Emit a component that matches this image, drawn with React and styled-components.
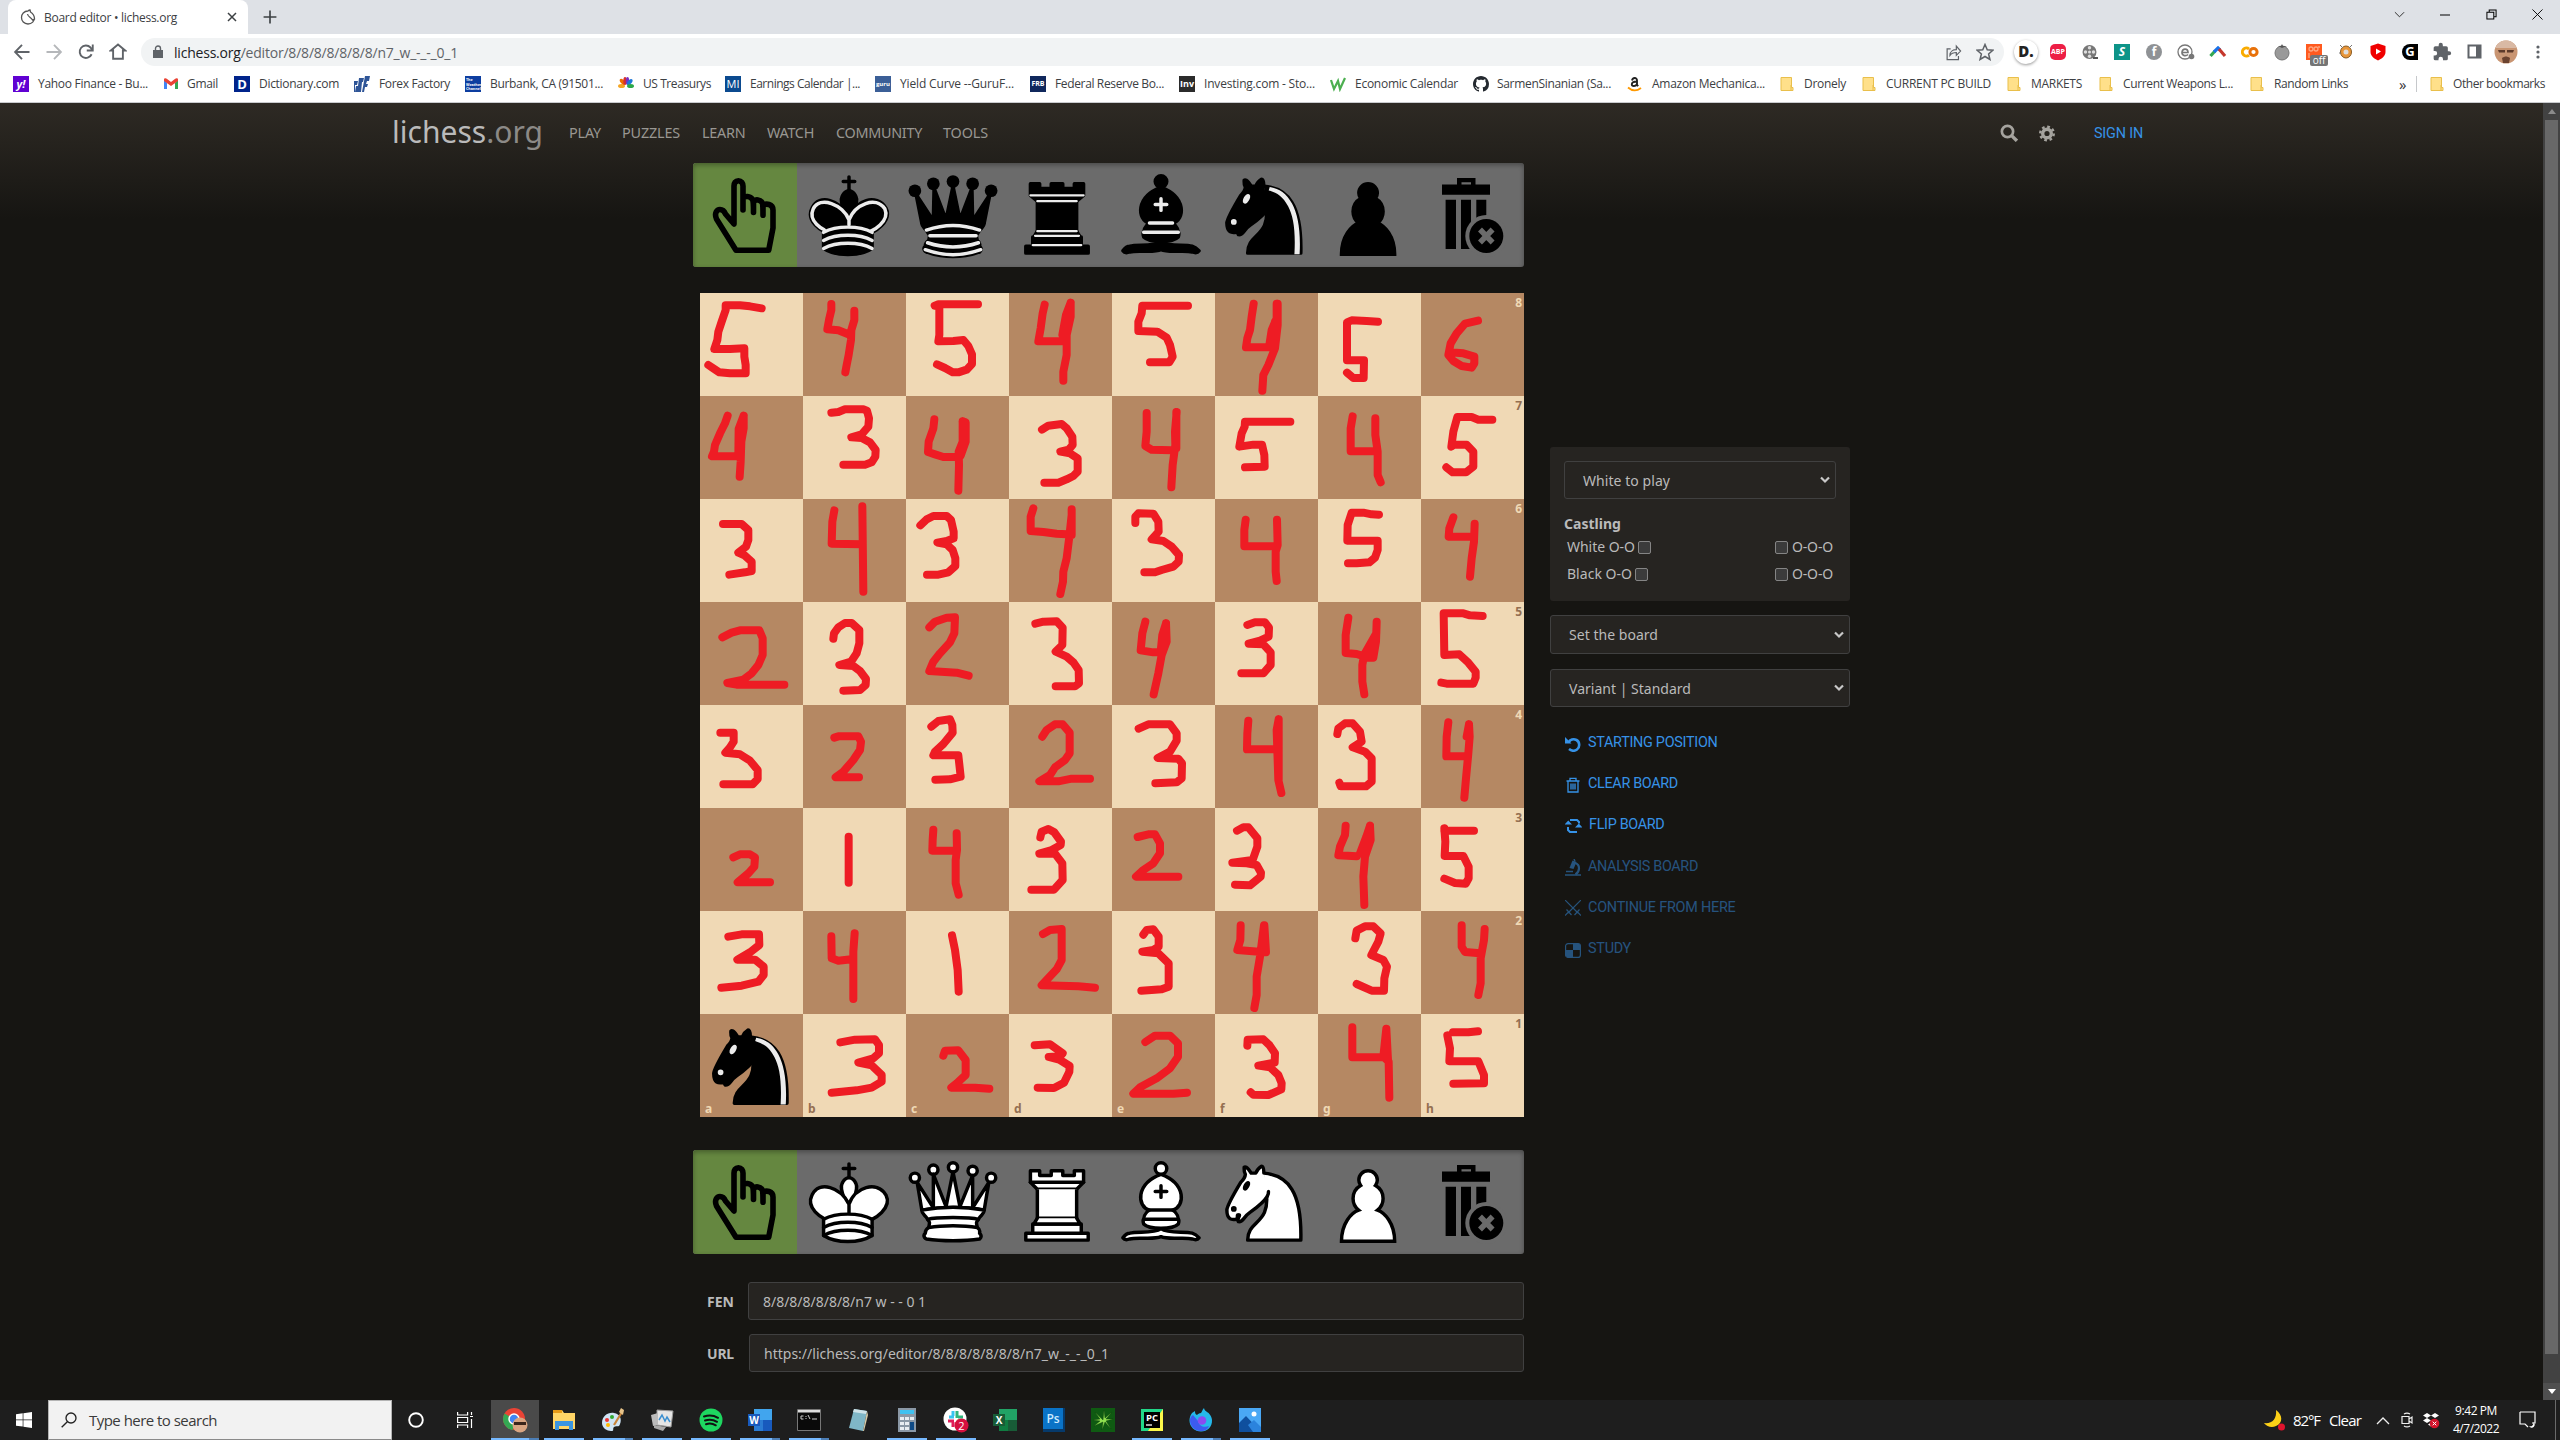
import React, { useLayoutEffect, useRef, useState } from "react";
import styled, { createGlobalStyle, css } from "styled-components";

const GlobalStyle = createGlobalStyle`
  * { box-sizing: border-box; }
  html, body { margin: 0; padding: 0; background: #161512; overflow: hidden; }
  body { font-family: "Noto Sans", "Open Sans", sans-serif; }
  svg { display: block; flex: none; }
`;

/* ---------- text that tracks to a given width ---------- */
const FitSpan = styled.span`
  display: block;
  flex: none;
  white-space: nowrap;
`;

function Fit({ w, children, className }) {
  const ref = useRef(null);
  const [ls, setLs] = useState(0);
  const length = React.Children.toArray(children)
    .map((c) => (typeof c === "string" ? c : c.props.children))
    .join("").length;
  useLayoutEffect(() => {
    const range = document.createRange();
    range.selectNodeContents(ref.current);
    const natural = range.getBoundingClientRect().width - ls * length;
    setLs((w - natural) / length);
  }, [w, length]);
  return (
    <FitSpan ref={ref} className={className} style={{ width: w, letterSpacing: ls }}>
      {children}
    </FitSpan>
  );
}

/* ---------- browser window ---------- */
const Desktop = styled.div`
  width: 2560px;
  height: 1440px;
  display: flex;
  flex-direction: column;
  overflow: hidden;
`;

const TitleBar = styled.div`
  height: 34px;
  flex: none;
  display: flex;
  background: #dee1e6;
  padding-left: 8px;
`;

const Tab = styled.div`
  width: 240px;
  height: 34px;
  display: flex;
  align-items: center;
  padding: 0 10px 0 12px;
  gap: 8px;
  background: #fff;
  border-radius: 8px 8px 0 0;
  font: 12px "Open Sans", sans-serif;
  color: #3c4043;
`;

const Push = styled.div`
  flex: 1;
`;

const NewTab = styled.div`
  width: 44px;
  height: 34px;
  display: grid;
  place-items: center;
`;

const WindowButtons = styled.div`
  display: flex;
  height: 29px;
  margin-right: 0;
`;

const WindowButton = styled.div`
  width: 46px;
  display: grid;
  place-items: center;
`;

const Toolbar = styled.div`
  height: 35px;
  flex: none;
  display: flex;
  align-items: center;
  background: #fff;
  padding-left: 6px;
`;

const ToolCell = styled.div`
  width: 32px;
  height: 32px;
  flex: none;
  display: grid;
  place-items: center;
`;

const Omnibox = styled.div`
  width: 1863px;
  height: 28px;
  margin: 1px 6px 0 7px;
  border-radius: 14px;
  background: #f1f3f4;
  display: flex;
  align-items: center;
  padding-left: 12px;
  gap: 11px;
  font: 14px "Open Sans", sans-serif;
  color: #5f6368;
  b {
    font-weight: 400;
    color: #202124;
  }
`;

const OmniActions = styled.div`
  display: flex;
  margin-left: auto;
  margin-right: 3px;
`;

const Bookmarks = styled.div`
  height: 34px;
  flex: none;
  display: flex;
  align-items: center;
  background: #fff;
  border-bottom: 1px solid #c9cbce;
  padding: 0 0 4px 13px;
  font: 12px "Open Sans", sans-serif;
  color: #3c4043;
`;

const Bookmark = styled.div`
  width: ${(p) => p.$w}px;
  flex: none;
  display: flex;
  align-items: center;
  gap: ${(p) => p.$gap || 9}px;
`;

const Favicon = styled.div`
  width: 16px;
  height: 16px;
  flex: none;
  background: ${(p) => p.$bg || "transparent"};
  color: ${(p) => p.$fg || "#fff"};
  font: ${(p) => p.$font || "700 9px 'Open Sans', sans-serif"};
  line-height: 16px;
  text-align: center;
  white-space: nowrap;
`;

const Divider = styled.div`
  width: 1px;
  height: 16px;
  background: #c6c8cb;
  margin-right: 12px;
`;

const More = styled.div`
  width: 17px;
  font-size: 15px;
  line-height: 14px;
  color: #333;
`;

/* ---------- page ---------- */
const Viewport = styled.div`
  height: 1297px;
  flex: none;
  display: flex;
`;

const Page = styled.div`
  width: 2543px;
  background: linear-gradient(to bottom, #2e2a24, #161512 116px) no-repeat #161512;
`;

const Scrollbar = styled.div`
  width: 17px;
  background: #424242;
  display: flex;
  flex-direction: column;
  align-items: center;
`;

const ScrollButton = styled.div`
  width: 17px;
  height: 17px;
  display: grid;
  place-items: center;
  background: ${(p) => (p.$lit ? "#4f4f4f" : "#424242")};
`;

const Thumb = styled.div`
  width: 13px;
  height: 1234px;
  background: #686868;
  margin-bottom: auto;
`;

const Header = styled.header`
  height: 60px;
  display: flex;
  align-items: center;
  padding-left: 392px;
`;

const SiteTitle = styled.div`
  font-size: 30px;
  line-height: 60px;
  color: #bababa;
  margin-right: 26px;
  padding-bottom: 3px;
  span span {
    color: #8c8a87;
  }
`;

const NavItem = styled.div`
  width: ${(p) => p.$w}px;
  padding-bottom: 1px;
  font-size: 14.4px;
  color: #999792;
`;

const HeaderTools = styled.div`
  display: flex;
  align-items: center;
  margin-left: auto;
  padding-right: 400px;
  font: 14.4px Roboto, sans-serif;
  color: #3692e7;
`;

const SearchSlot = styled.div`
  margin-right: 21px;
`;
const GearSlot = styled.div`
  margin-right: 39px;
`;

const Main = styled.main`
  display: flex;
  padding-left: 693px;
`;

const Editor = styled.div`
  width: 831px;
`;

const Palette = styled.div`
  height: 104px;
  display: grid;
  grid-template-columns: repeat(8, 1fr);
  background: #6b6b6b;
  border-radius: 3px;
  overflow: hidden;
  position: relative;
  &::after {
    content: "";
    position: absolute;
    inset: 0;
    border-radius: 3px;
    box-shadow: inset 0 2px 5px rgba(0, 0, 0, 0.32);
  }
`;

const PaletteCell = styled.div`
  display: grid;
  place-items: center;
  background: ${(p) => (p.$selected ? "#658740" : "transparent")};
`;

const BoardFrame = styled.div`
  width: 824px;
  height: 824px;
  margin: 26px 0 33px 7px;
  position: relative;
`;

const Board = styled.div`
  display: grid;
  grid-template-columns: repeat(8, 103px);
  grid-template-rows: repeat(8, 103px);
`;

const Square = styled.div`
  background: ${(p) => (p.$dark ? "#b58863" : "#f0d9b5")};
  color: ${(p) => (p.$dark ? "#f0d9b5" : "#946f51")};
  display: flex;
  flex-direction: column;
  justify-content: space-between;
  font-size: 12px;
  font-weight: 700;
  line-height: 16px;
`;

const Rank = styled.span`
  align-self: flex-end;
  padding: 2px 2px 0 0;
`;

const File = styled.span`
  padding-left: 5px;
  margin-top: auto;
`;

const BoardPiece = styled.div`
  position: absolute;
  left: 0;
  bottom: 0;
`;

const Ink = styled.svg`
  position: absolute;
  left: 0;
  top: 0;
`;

const Copyables = styled.div`
  display: flex;
  flex-direction: column;
  gap: 14px;
  margin-top: 28px;
`;

const CopyRow = styled.div`
  display: flex;
  align-items: center;
  padding-left: 14px;
  font-size: 14px;
  color: #bababa;
`;

const RowLabel = styled.div`
  width: ${(p) => p.$w}px;
  font-weight: 700;
`;

const TextField = styled.div`
  flex: 1;
  height: 38px;
  display: flex;
  align-items: center;
  padding-left: 14px;
  background: #262421;
  border: 1px solid #404040;
  border-radius: 3px;
`;

const Side = styled.aside`
  width: 300px;
  margin: 284px 0 0 26px;
  color: #bababa;
  font-size: 14px;
`;

const Meta = styled.div`
  height: 154px;
  padding: 14px 14px 0;
  background: #262421;
  border-radius: 3px;
  margin-bottom: 14px;
`;

const Select = styled.div`
  height: ${(p) => p.$h || 38}px;
  display: flex;
  align-items: center;
  justify-content: space-between;
  padding: 0 4px 0 18px;
  background: #262421;
  border: 1px solid #404040;
  border-radius: 3px;
  margin-bottom: 15px;
`;

const CastlingTitle = styled.div`
  font-weight: 700;
  line-height: 20px;
`;

const CastlingRow = styled.div`
  height: 27px;
  display: flex;
  align-items: center;
  padding: 0 3px;
  margin-top: ${(p) => (p.$first ? "-1px" : "0")};
`;

const Check = styled.div`
  width: 13px;
  height: 13px;
  margin: ${(p) => p.$m};
  background: #3b3b3b;
  border: 1px solid #858585;
  border-radius: 2px;
`;

const Action = styled.div`
  height: 41.2px;
  display: flex;
  align-items: center;
  gap: 7px;
  padding-left: 15px;
  font: 14.4px Roboto, sans-serif;
  color: #3692e7;
  opacity: ${(p) => (p.$off ? 0.5 : 1)};
  svg {
    margin-top: 2px;
  }
`;

/* ---------- taskbar ---------- */
const Taskbar = styled.div`
  height: 40px;
  flex: none;
  display: flex;
  background: #1e1e1e;
  color: #fff;
`;

const StartButton = styled.div`
  width: 48px;
  display: grid;
  place-items: center;
`;

const SearchBox = styled.div`
  width: 344px;
  display: flex;
  align-items: center;
  gap: 12px;
  padding-left: 12px;
  background: #f2f2f2;
  border: 1px solid #b4b4b4;
  border-bottom-color: #8a8a8a;
  color: #3a3a3a;
  font: 15px "Open Sans", sans-serif;
`;

const TaskGlyph = styled.div`
  width: ${(p) => p.$w}px;
  display: grid;
  place-items: center;
`;

const Task = styled.div`
  width: 48px;
  height: 40px;
  margin-right: 1px;
  display: grid;
  place-items: center;
  position: relative;
  ${(p) => p.$active && css`background: #4a4a4a;`}
  &::after {
    content: "";
    position: absolute;
    bottom: 0;
    left: ${(p) => (p.$active ? 0 : 4)}px;
    right: ${(p) => (p.$active ? 0 : 4)}px;
    height: 2px;
    background: ${(p) =>
      p.$run === 2 ? "linear-gradient(90deg, #76b9ff 80%, #4c7eb5 80%)" : p.$run ? "#76b9ff" : "transparent"};
  }
`;

const Tray = styled.div`
  display: flex;
  align-items: center;
  margin-left: auto;
  font: 15px "Open Sans", sans-serif;
`;

const TraySlot = styled.div`
  width: ${(p) => p.$w}px;
  flex: none;
`;

const Clock = styled.div`
  width: 66px;
  display: flex;
  flex-direction: column;
  align-items: flex-start;
  font-size: 12px;
  line-height: 18px;
  > :first-child {
    margin-left: 2px;
  }
`;

const PeekLine = styled.div`
  width: 5px;
  height: 40px;
  border-left: 1px solid #6a6a6a;
`;

/* ---------- chess pieces ---------- */
const Piece = ({ size = 104, children }) => (
  <svg
    width={size}
    height={size}
    viewBox="0 0 45 45"
    fill="none"
    fillRule="evenodd"
    stroke="#000"
    strokeWidth="1.5"
    strokeLinecap="round"
    strokeLinejoin="round"
  >
    {children}
  </svg>
);

const K_BODY = "M11.5 37c5.5 3.5 15.5 3.5 21 0v-7s9-4.5 6-10.5c-4-6.5-13.5-3.5-16 4V27v-3.5c-3.5-7.5-13-10.5-16-4-3 6 5 10 5 10z";
const K_HEAD = "M22.5 25s4.5-7.5 3-10.5c0 0-1-2.5-3-2.5s-3 2.5-3 2.5c-1.5 3 3 10.5 3 10.5";
const K_BANDS = "M11.5 30c5.5-3 15.5-3 21 0m-21 3.5c5.5-3 15.5-3 21 0m-21 3.5c5.5-3 15.5-3 21 0";
const Q_BASE =
  "M9 26c0 2 1.5 2 2.5 4 1 1.5 1 1 .5 3.5-1.5 1-1.5 2.5-1.5 2.5-1.5 1.5.5 2.5.5 2.5 6.5 1 16.5 1 23 0 0 0 1.5-1 0-2.5 0 0 .5-1.5-1-2.5-.5-2.5-.5-2 .5-3.5 1-2 2.5-2 2.5-4-8.5-1.5-18.5-1.5-27 0z";

const King = ({ white }) => (
  <Piece>
    <path strokeLinejoin="miter" d="M22.5 11.63V6M20 8h5" />
    <path fill={white ? "#fff" : "#000"} strokeLinecap="butt" strokeLinejoin="miter" d={K_HEAD} />
    <path fill={white ? "#fff" : "#000"} d={K_BODY} />
    {!white && (
      <path stroke="#ececec" d="M32 29.5s8.5-4 6-9.7C34.1 14 25 18 22.5 24.6v2.1-2.1C20 18 9.9 14 7 19.9c-2.5 5.6 4.8 9 4.8 9" />
    )}
    <path stroke={white ? "#000" : "#ececec"} d={K_BANDS} />
  </Piece>
);

const Queen = ({ white }) =>
  white ? (
    <Piece>
      <g fill="#fff">
        <path d="M8 12a2 2 0 1 1-4 0 2 2 0 1 1 4 0zm16.5-4.5a2 2 0 1 1-4 0 2 2 0 1 1 4 0zM41 12a2 2 0 1 1-4 0 2 2 0 1 1 4 0zM16 8.5a2 2 0 1 1-4 0 2 2 0 1 1 4 0zM33 9a2 2 0 1 1-4 0 2 2 0 1 1 4 0z" />
        <path strokeLinecap="butt" d="M9 26c8.5-1.5 21-1.5 27 0l2-12-7 11V11l-5.5 13.5-3-15-3 15-5.5-14V25L7 14z" />
        <path strokeLinecap="butt" d={Q_BASE} />
      </g>
      <path d="M11.5 30c3.5-1 18.5-1 22 0M12 33.5c6-1 15-1 21 0" />
    </Piece>
  ) : (
    <Piece>
      <g fill="#000" stroke="none">
        <circle cx="6" cy="12" r="2.75" />
        <circle cx="14" cy="9" r="2.75" />
        <circle cx="22.5" cy="8" r="2.75" />
        <circle cx="31" cy="9" r="2.75" />
        <circle cx="39" cy="12" r="2.75" />
      </g>
      <g fill="#000" strokeLinecap="butt">
        <path d="M9 26c8.5-1.5 21-1.5 27 0l2.5-12.5L31 25l-.3-14.1-5.2 13.6-3-14.5-3 14.5-5.2-13.6L14 25 6.5 13.5z" />
        <path d={Q_BASE} />
      </g>
      <path strokeLinecap="butt" d="M11 38.5a35 35 1 0 0 23 0" />
      <path stroke="#ececec" d="M11 29a35 35 1 0 1 23 0M12.5 31.5h20M11.5 34.5a35 35 1 0 0 22 0M10.5 37.5a35 35 1 0 0 24 0" />
    </Piece>
  );

const Rook = ({ white }) =>
  white ? (
    <Piece>
      <g fill="#fff">
        <path strokeLinecap="butt" d="M9 39h27v-3H9v3zm3-3v-4h21v4H12zm-1-22V9h4v2h5V9h5v2h5V9h4v5" />
        <path d="M34 14l-3 3H14l-3-3" />
        <path strokeLinecap="butt" strokeLinejoin="miter" d="M31 17v12.5H14V17" />
        <path d="M31 29.5l1.5 2.5h-20l1.5-2.5" />
        <path fill="none" strokeLinejoin="miter" d="M11 14h23" />
      </g>
    </Piece>
  ) : (
    <Piece>
      <g fill="#000" strokeLinecap="butt">
        <path d="M9 39h27v-3H9v3zm3.5-7l1.5-2.5h17l1.5 2.5h-20zm-.5 4v-4h21v4H12z" />
        <path strokeLinejoin="miter" d="M14 29.5v-13h17v13H14z" />
        <path d="M14 16.5L11 14h23l-3 2.5H14zM11 14V9h4v2h5V9h5v2h5V9h4v5H11z" />
      </g>
      <path stroke="#ececec" strokeWidth="1" strokeLinejoin="miter" d="M12 35.5h21m-20-4h19m-18-2h17m-17-13h17M11 14h23" />
    </Piece>
  );

const Bishop = ({ white }) => (
  <Piece>
    <g fill={white ? "#fff" : "#000"} strokeLinecap="butt">
      <path d="M9 36c3.4-1 10.1.4 13.5-2 3.4 2.4 10.1 1 13.5 2 0 0 1.6.5 3 2-.7 1-1.6 1-3 .5-3.4-1-10.1.5-13.5-1-3.4 1.5-10.1 0-13.5 1-1.4.5-2.3.5-3-.5 1.4-2 3-2 3-2z" />
      <path d="M15 32c2.5 2.5 12.5 2.5 15 0 .5-1.5 0-2 0-2 0-2.5-2.5-4-2.5-4 5.5-1.5 6-11.5-5-15.5-11 4-10.5 14-5 15.5 0 0-2.5 1.5-2.5 4 0 0-.5.5 0 2z" />
      <path d="M25 8a2.5 2.5 0 1 1-5 0 2.5 2.5 0 1 1 5 0z" />
    </g>
    <path stroke={white ? "#000" : "#ececec"} strokeLinejoin="miter" d="M17.5 26h10M15 30h15m-7.5-14.5v5M20 18h5" />
  </Piece>
);

const Knight = ({ white, size }) => (
  <Piece size={size}>
    <g fill={white ? "#fff" : "#000"}>
      <path d="M22 10c10.5 1 16.5 8 16 29H15c0-9 10-6.5 8-21" />
      <path d="M24 18c.38 2.91-5.55 7.37-8 9-3 2-2.82 4.34-5 4-1.042-.94 1.41-3.04 0-3-1 0 .19 1.23-1 2-1 0-4.003 1-4-4 0-2 6-12 6-12s1.89-1.9 2-3.5c-.73-.994-.5-2-.5-3 1-1 3 2.5 3 2.5h2s.78-1.992 2.5-3c1 0 1 3 1 3" />
    </g>
    <path
      fill={white ? "#000" : "#ececec"}
      stroke={white ? "#000" : "#ececec"}
      d="M9.5 25.5a.5.5 0 1 1-1 0 .5.5 0 1 1 1 0zm5.433-9.75a.5 1.5 30 1 1-.866-.5.5 1.5 30 1 1 .866.5z"
    />
    {!white && (
      <path
        fill="#ececec"
        stroke="none"
        d="M24.55 10.4l-.45 1.45.5.15c3.15 1 5.65 2.49 7.9 6.75S35.75 29.06 35.25 39l-.05.5h2.25l.05-.5c.5-10.06-.88-16.85-3.25-21.34-2.37-4.49-5.79-6.64-9.19-7.16z"
      />
    )}
  </Piece>
);

const Pawn = ({ white }) => (
  <Piece>
    <path
      fill={white ? "#fff" : "#000"}
      strokeLinejoin="miter"
      d="M22.1 9c-2.21 0-4 1.79-4 4 0 .89.29 1.71.78 2.38C16.93 16.5 15.6 18.59 15.6 21c0 2.03.94 3.84 2.41 5.03-3 1.06-7.41 5.55-7.41 13.47h23c0-7.92-4.41-12.41-7.41-13.47 1.47-1.19 2.41-3 2.41-5.03 0-2.41-1.33-4.5-3.28-5.62.49-.67.78-1.49.78-2.38 0-2.21-1.79-4-4-4z"
    />
  </Piece>
);

const Hand = () => (
  <svg width="104" height="104" viewBox="0 0 104 104" fill="none" stroke="#000" strokeWidth="5.6" strokeLinejoin="round" strokeLinecap="round">
    <path d="M43 87.3 23.5 56C21 50 24 46.5 27 46.5c3 0 4.500 2 5.500 4.500L41 61V23c0-3 1.500-5.300 4.400-5.300s4.600 2.300 4.600 5.300v24V35c2-2 7-2.500 9.500 1.500.8 1.500 1 3 1 13V38c2.500-1.800 6.500-1.500 8.500 1.300.9 1.300 1 3 1 13V42c3-1.500 10-1.500 10 5v18l-4.300 22.300z" />
  </svg>
);

const Trash = () => (
  <svg width="104" height="104" viewBox="1 0 104 104" fill="#000">
    <path fillRule="evenodd" d="M37 15h18.500v6.500H70v10.300H22V21.500h15zM41.500 19.300v2.200h9.500v-2.200z" />
    <path d="M25.600 36.700H36V86H25.600zM41 36.700h10V86H41zM56.300 36.700h10V60h-10z" />
    <circle cx="66.300" cy="73" r="21" fill="#6b6b6b" />
    <circle cx="66.300" cy="73" r="17" />
    <path d="m60 66.500 12.600 13M72.600 66.500 60 79.500" stroke="#6b6b6b" strokeWidth="5.500" />
  </svg>
);

const PaletteRow = ({ white }) => (
  <Palette>
    <PaletteCell $selected><Hand /></PaletteCell>
    <PaletteCell><King white={white} /></PaletteCell>
    <PaletteCell><Queen white={white} /></PaletteCell>
    <PaletteCell><Rook white={white} /></PaletteCell>
    <PaletteCell><Bishop white={white} /></PaletteCell>
    <PaletteCell><Knight white={white} size={104} /></PaletteCell>
    <PaletteCell><Pawn white={white} /></PaletteCell>
    <PaletteCell><Trash /></PaletteCell>
  </Palette>
);

/* ---------- pen strokes drawn over the board, in thirds of a pixel, one list per quarter ---------- */
const STROKES = [
  { x: -10, y: -8, paths: [
    "M215 70 180 64 150 61H107V75L95 110 85 140 82 165 73 192H120L163 190V215L167 240V265H120L88 262 70 250 55 240",
    "M424 57V75L418 100 412 133 445 136 475 148M493 77V105L484 135 483 165 476 210 470 240 466 262",
    "M734 62 745 58H864M748 62V150L745 169 790 168 820 165 835 183 846 208V237L830 254 805 262H788L765 249 741 238",
    "M1064 59 1058 85 1052 130 1045 169H1120M1142 53V95L1130 150V210L1120 260V287M1142 53 1128 90 1117 150 1128 169",
    "M113 392 105 415 90 445 75 480 72 500 66 514H150M161 392 146 432 145 514M161 392V430L154 470 152 530 149 575",
    "M424 383 445 381 465 373H520L531 377 537 400 535 425 515 448 484 457 515 459 540 472 557 495 556 515 545 532 525 539H460",
    "M733 403 730 430 716 470 714 501 735 508 760 516H800M818 409V470L806 500 807 540 805 617M818 409 827 412V470L812 512",
    "M1056 434 1075 422 1115 417 1130 430 1147 455 1148 480 1136 494 1111 500 1140 505 1163 520V560L1150 573 1130 583 1105 593H1063",
    "M99 717H155L175 735V765L168 785 145 803 165 812 185 830V858L165 862 118 869",
    "M433 676 427 710 425 776 515 778M517 664 520 920",
    "M691 721 710 703 730 693H770L783 705 791 740V760L770 768 742 773 770 778 788 795 796 820V843L775 862 745 869H711",
    "M1030 670 1022 695V738L1060 741 1100 746 1130 748M1145 673V690L1138 755 1130 820 1120 860 1119 890 1111 927M1145 673V750",
    "M97 1057 125 1043 150 1036H208L218 1060V1110L205 1140 185 1165 160 1184 112 1194 140 1199H283",
    "M430 1061 432 1045 445 1027 465 1014H485L508 1035V1075L500 1105 483 1130 448 1140 490 1143 510 1158 528 1182 527 1200 510 1215 460 1217",
    "M718 1027 735 1010 770 998 795 997 793 1045 780 1072 750 1105 730 1130 718 1158 800 1163 836 1172",
    "M1036 1016 1060 1010 1100 1009 1118 1028 1117 1080 1097 1100 1130 1115 1150 1132 1166 1155 1167 1195 1155 1204H1097",
  ] },
  { x: 410, y: -8, paths: [
    "M234 62H97L95 85 85 110V138L142 140 170 158 180 180 188 215 178 232H120",
    "M431 56 425 95 420 135 412 160 408 187H490M500 56V100L485 135 478 180M503 56V120L495 190 475 240 460 270 457 317M495 110 488 180",
    "M804 110 770 108 725 106 711 112V226H762L761 279H730L711 263",
    "M1104 107 1065 116 1040 145 1022 175 1015 210 1030 228 1055 243 1085 248 1093 235V215L1060 205 1018 202",
    "M110 384V440L106 483 125 494 185 496M200 381 195 440 196 480 188 540 184 607M199 381V490",
    "M541 410H405L404 425 395 445 388 485 430 479H456L463 510 464 545 405 547",
    "M728 394 722 430V499H795M796 400V450L803 500V570L812 592",
    "M1147 404H1105L1085 396H1042L1030 440 1024 485 1032 479H1070L1090 500V545L1068 562H1028L1009 547",
    "M76 714V695L85 685 130 686 145 710 146 740 125 763 160 768 185 785 207 810 206 830 190 845 155 855 135 862H103",
    "M407 704 403 735V784H500M501 704 503 780 497 800V860L500 888",
    "M807 689 785 688 760 683H725L713 720 712 767H803V795L795 818 778 832 740 835H714",
    "M1030 697 1018 730 1016 755H1090M1094 716 1092 770 1085 820 1080 875",
    "M106 1010 97 1045 92 1096 130 1102H155M168 1015 170 1070 155 1110 145 1165 131 1228M168 1015 157 1050 152 1100M164 1030 160 1090",
    "M412 1020 435 1012H465L477 1028 476 1055 450 1067 416 1076 460 1078 482 1102V1140L460 1165H394",
    "M715 998 707 1050V1104L740 1107 765 1115M800 1010 799 1045 762 1110 757 1140V1190L763 1228M800 1010 798 1070 790 1118H770L796 1060 782 1105",
    "M1118 993 1080 991 1060 985H1001L1003 1110 1048 1108 1075 1133 1097 1160V1178L1090 1196H1010L994 1193",
  ] },
  { x: -10, y: 407, paths: [
    "M91 98H131V125L118 145 106 158 150 163 180 182 203 210V237L188 253H100",
    "M433 113 445 109H505L513 125 510 150 490 180 460 215 437 232H507",
    "M724 80 745 63 780 58 787 75 788 98 760 132 735 155 730 166H805L812 230 780 238 736 239",
    "M1057 110 1070 90 1095 73H1118L1139 98V160L1125 180 1095 202 1080 225 1048 244H1105L1145 236H1200",
    "M130 472 150 463H180L195 472 193 500 175 520 143 547H240",
    "M476 410V548",
    "M730 389 728 420 727 452H800M800 400 801 450 797 480V550L806 584",
    "M1051 412 1055 395 1075 387 1093 397 1113 425 1112 435 1085 450 1048 461H1095L1117 490 1118 540 1092 569H1024",
    "M115 710 155 703H207L208 735 180 757 142 779H195L221 800V825L205 845 155 857 94 863",
    "M424 709 425 775 445 782 490 777M494 700 490 755V897",
    "M786 706 795 750 803 810 806 875",
    "M1059 702 1080 690 1115 687V780L1100 808 1055 856 1165 859 1215 863",
    "M451 1027 495 1019 555 1018 567 1035V1060L550 1075 505 1088 545 1096 575 1125V1145L545 1163 500 1171 425 1178",
    "M760 1067 765 1052 805 1051 827 1080V1125L800 1150 784 1163H855L898 1166",
    "M1034 1036 1080 1033 1118 1060 1110 1069 1076 1071 1110 1080 1139 1098 1138 1115 1122 1148 1092 1164 1043 1163",
  ] },
  { x: 410, y: 407, paths: [
    "M86 86 115 73H180L200 100V122L180 155 143 174 205 176 216 190 215 235 200 247 136 250",
    "M415 62 412 100 411 148H500M506 58 500 90 505 240 514 279M506 58V240",
    "M682 102 685 85 705 70H728L750 95 755 125 728 142 765 155 785 175V245L768 259H692L688 248",
    "M1015 67 1010 110 1009 169H1070M1077 73 1079 110 1075 160 1068 235 1063 293M1077 73 1070 110",
    "M83 411 115 403H135L150 430V460L130 490 100 510 78 530H205",
    "M381 392 400 382H415L442 415V440L428 480 367 488 410 490 440 495 453 518 452 530 420 556 375 554",
    "M707 377 705 405 690 440 685 466 740 469M780 377 782 420 765 470 760 530 763 615M780 377 769 410 750 460",
    "M1092 392H1003M1003 385 1006 425 1004 468H1060L1076 500V535L1067 551 1035 549 1003 536",
    "M100 704 110 690 130 688 146 710V740L130 750 97 755 145 760 176 790V860L155 868 94 872",
    "M392 676 391 720 382 750 465 757M463 676 468 757M462 676 450 770 440 830V885L433 924",
    "M736 715 740 692 765 679H790L812 700 805 725 784 765 820 780 831 800 823 835 822 872H785L740 852",
    "M1055 676V740L1065 756 1110 760M1124 687 1122 720 1112 775V850L1105 885",
    "M106 1026 135 1007H180L204 1030V1070L180 1105 140 1135 90 1162 70 1181H190L231 1178",
    "M412 1037 413 1019 460 1018 478 1035 495 1060 494 1088 445 1097 480 1102 505 1125 515 1150 514 1168 475 1185 430 1184 422 1177",
    "M727 982V1072H815M829 986 820 1070 836 1085 838 1193M829 986 834 1080",
    "M1104 994 1075 997H1029M1012 1006 1020 1045 1018 1084H1105L1122 1125V1150L1030 1151",
  ] },
];

/* ---------- small icons ---------- */
const Line = ({ s = 16, c = "#5f6368", w = 2, vb = 24, children, fill = "none" }) => (
  <svg width={s} height={s} viewBox={`0 0 ${vb} ${vb}`} fill={fill} stroke={c} strokeWidth={w} strokeLinecap="butt">
    {children}
  </svg>
);

const Folder = () => (
  <svg width="16" height="16" viewBox="0 0 16 16">
    <path d="M2 1.500h10.500v10H14v3H2z" fill="#ffe08a" stroke="#e9bf4b" />
    <path d="M12 9v5.500" stroke="#e9bf4b" />
  </svg>
);

const Chevron = () => (
  <svg width="12" height="12" viewBox="0 0 12 12" fill="none" stroke="#c8c8c8" strokeWidth="2.200">
    <path d="m2 3.500 4 4 4-4" />
  </svg>
);

const bookmarkIcons = {
  gmail: (
    <svg width="16" height="16" viewBox="0 0 16 16">
      <path d="M1 3v10h3V7z" fill="#4285f4" /><path d="M15 3v10h-3V7z" fill="#34a853" />
      <path d="M1 5V3.500C1 2 3 2 3.800 2.800L8 6l4.200-3.200C13 2 15 2 15 3.500V5L8 10z" fill="#ea4335" />
    </svg>
  ),
  ff: (
    <svg width="16" height="16" viewBox="0 0 16 16" fill="#2f5597">
      <path d="M0 5h4L3 9H1v7H0zM5 2h5L9 6H8l-1 10H1l1-6h2zM11 0h5l-1 5h-2l-1 3h2l-1 3h-2l-1 5H8z" />
    </svg>
  ),
  nbc: (
    <svg width="16" height="16" viewBox="0 0 16 16">
      <ellipse cx="3.500" cy="10" rx="3.500" ry="2" fill="#f5a623" /><ellipse cx="4.500" cy="5.800" rx="2" ry="3.500" fill="#ef6c00" transform="rotate(-40 4.500 5.800)" />
      <ellipse cx="7" cy="5" rx="1.700" ry="4" fill="#d32f2f" /><ellipse cx="9.500" cy="5" rx="1.700" ry="4" fill="#7b2fbf" />
      <ellipse cx="11.800" cy="6" rx="2" ry="3.500" fill="#1e78d8" transform="rotate(40 11.800 6)" /><ellipse cx="12.500" cy="10" rx="3.500" ry="2" fill="#2ba84a" />
    </svg>
  ),
  weather: (
    <svg width="16" height="16" viewBox="0 0 16 16" fontFamily="Open Sans, sans-serif" fontWeight="700" fontSize="3.600" fill="#fff">
      <path d="M0 0h16v16H0z" fill="#0d3ea0" />
      <text x="1" y="5">The</text><text x="1" y="9.500">Weather</text><text x="1" y="14">Channel</text>
    </svg>
  ),
  investing: (
    <svg width="16" height="16" viewBox="0 0 16 16">
      <path d="M1 4 4 13 8 5l2 8 5-11" fill="none" stroke="#4caf50" strokeWidth="2.200" />
    </svg>
  ),
  github: (
    <svg width="16" height="16" viewBox="0 0 16 16" fill="#24292f">
      <path d="M8 0C3.580 0 0 3.580 0 8c0 3.540 2.290 6.530 5.470 7.590.4.070.55-.17.55-.38 0-.19-.01-.82-.01-1.490-2.010.37-2.530-.49-2.690-.94-.09-.23-.48-.94-.82-1.130-.28-.15-.68-.52-.01-.53.63-.01 1.080.58 1.230.82.72 1.210 1.870.87 2.330.66.07-.52.28-.87.51-1.070-1.780-.2-3.640-.89-3.640-3.950 0-.87.31-1.590.82-2.150-.08-.2-.36-1.020.08-2.120 0 0 .67-.21 2.200.82.64-.18 1.320-.27 2-.27s1.360.09 2 .27c1.530-1.040 2.200-.82 2.200-.82.44 1.100.16 1.920.08 2.120.51.56.82 1.270.82 2.150 0 3.070-1.870 3.750-3.650 3.950.29.25.54.73.54 1.480 0 1.070-.01 1.930-.01 2.200 0 .21.15.46.55.38A8.010 8.010 0 0 0 16 8c0-4.420-3.580-8-8-8z" />
    </svg>
  ),
  amazon: (
    <svg width="16" height="16" viewBox="0 0 16 16" fill="none">
      <path d="M5 4.500C5.500 1.500 10 1 10 4.500V9l1.200 1.200M10 5.500C6 5.500 4.800 6.500 4.800 8.200 4.800 10.500 8.500 10.800 10 8" stroke="#222" strokeWidth="1.900" />
      <path d="M1 11.500c4 3.500 9 3.500 13 .5" stroke="#ff9900" strokeWidth="1.800" />
    </svg>
  ),
};

const BOOKMARKS = [
  { t: "Yahoo Finance - Bu...", tw: 110, w: 150, gap: 9, i: <Favicon $bg="#6001d2" $font="italic 700 11px 'Open Sans', sans-serif">y!</Favicon> },
  { t: "Gmail", tw: 31, w: 71, gap: 8, i: bookmarkIcons.gmail },
  { t: "Dictionary.com", tw: 80, w: 120, i: <Favicon $bg="#00248b" $font="700 13px 'Open Sans', sans-serif">D</Favicon> },
  { t: "Forex Factory", tw: 71, w: 111, i: bookmarkIcons.ff },
  { t: "Burbank, CA (91501...", tw: 113, w: 153, i: bookmarkIcons.weather },
  { t: "US Treasurys", tw: 68, w: 107, i: bookmarkIcons.nbc },
  { t: "Earnings Calendar |...", tw: 110, w: 150, i: <Favicon $bg="#0b4a8f" $font="11px 'Open Sans', sans-serif">MI</Favicon> },
  { t: "Yield Curve --GuruF...", tw: 114, w: 155, i: <Favicon $bg="#3b5f97" $font="700 6px 'Open Sans', sans-serif">guru</Favicon> },
  { t: "Federal Reserve Bo...", tw: 109, w: 149, i: <Favicon $bg="#10285c" $font="700 7px 'Open Sans', sans-serif">FRB</Favicon> },
  { t: "Investing.com - Sto...", tw: 111, w: 151, i: <Favicon $bg="#2b2b2b" $font="700 9px 'Open Sans', sans-serif">Inv</Favicon> },
  { t: "Economic Calendar", tw: 103, w: 143, i: bookmarkIcons.investing },
  { t: "SarmenSinanian (Sa...", tw: 114, w: 154, gap: 8, i: bookmarkIcons.github },
  { t: "Amazon Mechanica...", tw: 113, w: 152, i: bookmarkIcons.amazon },
  { t: "Dronely", tw: 42, w: 82, i: <Folder /> },
  { t: "CURRENT PC BUILD", tw: 105, w: 145, i: <Folder /> },
  { t: "MARKETS", tw: 51, w: 92, i: <Folder /> },
  { t: "Current Weapons L...", tw: 110, w: 151, i: <Folder /> },
  { t: "Random Links", tw: 74, w: 150, i: <Folder /> },
];

const Badge = styled.div`
  width: 18px;
  height: 11px;
  position: absolute;
  left: 4px;
  top: 11px;
  background: #757575;
  border-radius: 2px;
  color: #fff;
  font: 10px/10px "Open Sans", sans-serif;
  text-align: center;
`;

const ExtBox = styled.div`
  width: ${(p) => p.$s || 16}px;
  height: ${(p) => p.$s || 16}px;
  position: relative;
  display: grid;
  place-items: center;
  border-radius: ${(p) => p.$r || 0};
  background: ${(p) => p.$bg || "transparent"};
  color: ${(p) => p.$fg || "#fff"};
  font: ${(p) => p.$font || "700 10px 'Open Sans', sans-serif"};
  line-height: 1;
  ${(p) => p.$shadow && css`box-shadow: 0 1px 3px rgba(0, 0, 0, 0.4);`}
`;

const EXTENSIONS = [
  <ExtBox $s={24} $r="50%" $bg="#fff" $fg="#222" $shadow $font="800 15px 'Open Sans', sans-serif">D.</ExtBox>,
  <ExtBox $bg="#ed1e45" $r="5px" $font="700 7px 'Open Sans', sans-serif">ABP</ExtBox>,
  <svg width="16" height="16" viewBox="0 0 16 16"><circle cx="7.500" cy="8" r="7" fill="#777" /><circle cx="7.500" cy="8" r="1.500" fill="#ddd" /><circle cx="7.500" cy="3.800" r="1.700" fill="#ddd" /><circle cx="7.500" cy="12.200" r="1.700" fill="#ddd" /><circle cx="3.500" cy="8" r="1.700" fill="#ddd" /><circle cx="11.500" cy="8" r="1.700" fill="#ddd" /><path d="M11 13h5v2h-5z" fill="#555" /></svg>,
  <ExtBox $bg="#0d9488" $font="italic 700 12px 'Open Sans', sans-serif">S</ExtBox>,
  <ExtBox $bg="#8f9295" $r="50%" $font="700 12px 'Open Sans', sans-serif">f</ExtBox>,
  <svg width="18" height="16" viewBox="0 0 18 16" fill="none"><circle cx="8" cy="8" r="7" stroke="#777" strokeWidth="1.300" /><path d="M5 8.500h6C11 4 5 4 5 8.500c0 3.500 4 4 6 2" stroke="#777" strokeWidth="1.700" /><circle cx="14.500" cy="12.500" r="2.800" fill="#777" /></svg>,
  <svg width="18" height="12" viewBox="0 0 18 12" fill="none" strokeWidth="3.200"><path d="M1.500 10 6 5" stroke="#34a853" /><path d="m5 6 4-4 2 2" stroke="#1a73e8" /><path d="m10 3 6 7" stroke="#c5372c" /></svg>,
  <svg width="18" height="12" viewBox="0 0 18 12" fill="none" strokeWidth="3"><path d="M8 3a4 4 0 1 0 0 6" stroke="#f9ab00" /><circle cx="12.500" cy="6" r="3.600" stroke="#e8710a" /></svg>,
  <svg width="18" height="18" viewBox="0 0 18 18"><circle cx="9" cy="10" r="7" fill="#999" stroke="#777" /><path d="m9 5-4-2 3 0 1-2 1 2 4 0z" fill="#555" /></svg>,
  <ExtBox $bg="#ff5a1f"><svg width="16" height="16" viewBox="0 0 16 16" fill="none" stroke="#ffa57e" strokeWidth="1.300"><circle cx="5" cy="5" r="2" /><circle cx="10" cy="5" r="2" /><path d="M12 3h2M3 9v5" /></svg><Badge>off</Badge></ExtBox>,
  <svg width="18" height="18" viewBox="0 0 18 18"><ellipse cx="9" cy="9" rx="5.500" ry="6" fill="#e8963a" stroke="#8a5a20" /><circle cx="9" cy="9" r="2.500" fill="#ddd" /><path d="m3 2 3 3m9-3-3 3M2 10h2" stroke="#777" /></svg>,
  <svg width="16" height="18" viewBox="0 0 16 18"><path d="M8 .5 15.500 3v6c0 4-4 7-7.500 8.500C4.500 16 .5 13 .5 9V3z" fill="#f00000" /><path d="m6 5.500 5 3-5 3z" fill="#fff" /></svg>,
  <ExtBox $bg="#000" $r="8px 0 0 8px" $font="700 13px 'Open Sans', sans-serif">G</ExtBox>,
  <svg width="20" height="20" viewBox="0 0 24 24" fill="#5f6368"><path d="M20.500 11H19V7a2 2 0 0 0-2-2h-4V3.500a2.500 2.500 0 0 0-5 0V5H4a2 2 0 0 0-2 2v3.800h1.500a2.700 2.700 0 0 1 0 5.400H2V20a2 2 0 0 0 2 2h3.800v-1.500a2.700 2.700 0 0 1 5.400 0V22H17a2 2 0 0 0 2-2v-4h1.500a2.500 2.500 0 0 0 0-5z" /></svg>,
  <svg width="15" height="15" viewBox="0 0 15 15"><path d="M1.500 1.500h12v12h-12z" fill="none" stroke="#5f6368" strokeWidth="2" /><path d="M9 1h5v13H9z" fill="#5f6368" /></svg>,
  <svg width="24" height="24" viewBox="0 0 24 24"><circle cx="12" cy="12" r="11.500" fill="#c99572" /><path d="M1.500 8C3 3 7 .5 12 .5S21 3 22.500 8z" fill="#d9b9a4" /><path d="M4 10h7v2.500H5zM13 10h7l-1 2.500h-6z" fill="#5d3a2a" /><path d="M8 18c3-2 5-2 8 0l-1 5H9z" fill="#6b4330" /></svg>,
  <svg width="4" height="16" viewBox="0 0 4 16" fill="#5f6368"><circle cx="2" cy="3" r="1.600" /><circle cx="2" cy="8" r="1.600" /><circle cx="2" cy="13" r="1.600" /></svg>,
];

const TileIcon = ({ main, dark, mid, label }) => (
  <svg width="24" height="24" viewBox="0 0 24 24" fontFamily="Open Sans, sans-serif">
    <path d="M6 1h18v22H6z" fill={main} /><path d="M6 12h18v11H6z" fill={mid} /><path d="M15 12h9v11h-9z" fill={dark} />
    <path d="M0 6h12v12H0z" fill={dark} />
    <text x="6" y="15.500" fontSize="10" fontWeight="700" fill="#fff" textAnchor="middle">{label}</text>
  </svg>
);

const TASKS = [
  { active: true, run: 2, i: <svg width="26" height="26" viewBox="0 0 26 26"><circle cx="12" cy="12" r="11" fill="#ea4335" /><path d="M12 12 2.500 6.500A11 11 0 0 0 11 23z" fill="#34a853" /><path d="M12 12h11a11 11 0 0 1-10 11z" fill="#fbbc04" /><circle cx="12" cy="12" r="5" fill="#4285f4" stroke="#fff" strokeWidth="1.500" /><circle cx="18" cy="18" r="7.500" fill="#d9a582" /><path d="M12 15h12v3H12z" fill="#3a251b" /></svg> },
  { run: 1, i: <svg width="24" height="24" viewBox="0 0 24 24"><path d="M1 2h9l2 3h11v16H1z" fill="#ffd566" /><path d="M1 2h9v3H1z" fill="#e69a17" /><path d="M3 13h18v9h-4v-4H7v4H3z" fill="#3a95e0" /></svg> },
  { run: 2, i: <svg width="24" height="24" viewBox="0 0 24 24"><path d="M1 15C1 8 7 4 13 5s8 6 6 11c-1 4-4 1-6 3s1 4-3 4-9-3-9-8z" fill="#cfe4f5" /><circle cx="6" cy="12" r="2" fill="#e33" /><circle cx="11" cy="9" r="2" fill="#3a3" /><circle cx="7" cy="17" r="2" fill="#fb0" /><path d="m13 17 8-13" stroke="#c8843a" strokeWidth="2.200" /><path d="m20 0 3 2-1 5-4-3z" fill="#e8c48a" /></svg> },
  { run: 1, i: <svg width="24" height="24" viewBox="0 0 24 24"><path d="m7 2 16 1-2 16-14-2z" fill="#e5e5e5" stroke="#999" /><path d="m1 7 7-2v12l-5 1z" fill="#bbb" /><path d="m9 12 3-5 3 6 2-4 3 5" fill="none" stroke="#3a8fd0" strokeWidth="1.500" /><path d="m4 17 12 2-3 4-9-3z" fill="#aaa" /></svg> },
  { run: 1, i: <svg width="24" height="24" viewBox="0 0 24 24"><circle cx="12" cy="12" r="11.500" fill="#1ed760" /><path d="M5 8.500c5-1.500 10-1 14 1.300M6 12.500c4-1.200 8.500-.8 12 1.300M7 16.200c3-1 7-.6 9.800 1.100" fill="none" stroke="#111" strokeWidth="2" strokeLinecap="round" /></svg> },
  { run: 2, i: <TileIcon main="#41a5ee" mid="#2b7cd3" dark="#185abd" label="W" /> },
  { run: 2, i: <svg width="24" height="24" viewBox="0 0 24 24"><path d="M.5 1.500h23v21H.5z" fill="#0a0a0a" stroke="#777" /><path d="M1 2h22v2.500H1z" fill="#ddd" /><path d="M6.500 8H4v3h2.500M9 8v1m0 1v1M11 7l2 4M15 11h5" fill="none" stroke="#ccc" strokeWidth="1" /></svg> },
  { i: <svg width="24" height="24" viewBox="0 0 24 24"><path d="m8 1 13 2-4 20L3 20z" fill="#7fb7c7" /><path d="m8 1 13 2-1 3L7 4z" fill="#cfe3e8" /><path d="m21 3 1 4-4 16h-1z" fill="#d8cba8" /></svg> },
  { run: 1, i: <svg width="18" height="24" viewBox="0 0 18 24"><path d="M0 0h18v24H0z" fill="#8a98a6" /><path d="M2 2h14v4H2z" fill="#3fc1f0" /><path d="M2 9h4v3H2zM7 9h4v3H7zM12 9h4v3h-4zM2 14h4v3H2zM7 14h4v3H7zM2 19h4v3H2zM7 19h4v3H7z" fill="#e8edf2" /><path d="M12 14h4v8h-4z" fill="#0f4a85" /></svg> },
  { run: 1, i: <svg width="26" height="26" viewBox="0 0 26 26" fontFamily="Open Sans, sans-serif"><circle cx="12" cy="12" r="11.500" fill="#fff" /><path d="M6 10h5M10 4v5" stroke="#36c5f0" strokeWidth="3" /><path d="M14 4v7M15 10h5" stroke="#2eb67d" strokeWidth="3" /><path d="M5 14h6M10 15v5" stroke="#e01e5a" strokeWidth="3" /><path d="M14 14h6M14 15v5" stroke="#ecb22e" strokeWidth="3" /><circle cx="18.500" cy="18.500" r="7" fill="#d5103f" /><text x="18.500" y="22.500" fontSize="11" fill="#fff" textAnchor="middle">2</text></svg> },
  { i: <TileIcon main="#21a366" mid="#107c41" dark="#185c37" label="X" /> },
  { i: <svg width="22" height="24" viewBox="0 0 22 24" fontFamily="Open Sans, sans-serif"><path d="M0 0h22v24H0z" fill="#063a6b" /><path d="M0 0h20v21H0z" fill="#0a73c7" /><text x="10" y="15" fontSize="12" fontWeight="600" fill="#cdeaff" textAnchor="middle">Ps</text></svg> },
  { i: <svg width="24" height="24" viewBox="0 0 24 24"><path d="M0 0h24v24H0z" fill="#0f5a12" /><path d="m12 12 1-10 1 8 7-6-6 7h7l-7 2 5 8-6-7-3 8 1-8-9 4 6-5-7-1 7-1-5-7z" fill="#8fe04f" stroke="#0c3d0c" strokeWidth=".4" /></svg> },
  { run: 1, i: <svg width="24" height="24" viewBox="0 0 24 24" fontFamily="Open Sans, sans-serif"><path d="M1 1h22v22H1z" fill="#21d789" /><path d="M23 1v22H8z" fill="#fcf84a" /><path d="M4 4h16v16H4z" fill="#000" /><text x="12" y="13" fontSize="9.500" fontWeight="700" fill="#fff" textAnchor="middle">PC</text><path d="M6 17h6" stroke="#fff" strokeWidth="1.300" /></svg> },
  { run: 2, i: <svg width="24" height="24" viewBox="0 0 24 24"><path d="M3 5C1 8 .5 10 .5 12.500.5 19 6 23.500 12 23.500S23.500 19 23 12c-.3-4-3-7-5-8-1-1-3-2-3-4-2 2-2 4-3 5-2 0-3 1-4 2-2-.5-2-3-2-4z" fill="#25b8ea" /><path d="M1 12c0 6 4 11 11 11 4 0 7-2 8-5-5 2-10 0-11-5L4 7c-2 1-3 3-3 5z" fill="#3c5bf0" /><circle cx="13" cy="12.500" r="4.300" fill="#8a4bf0" /></svg> },
  { run: 1, i: <svg width="22" height="24" viewBox="0 0 22 24"><path d="M0 0h22v24H0z" fill="#4aa8f5" /><path d="m0 15 7-7 15 16H0z" fill="#0f4f9e" /><path d="m9 17 6-5 7 7v5H14z" fill="#2b83dd" /><circle cx="15" cy="6" r="2.500" fill="#fff" /></svg> },
];

const ACTIONS = [
  { t: "STARTING POSITION", w: 129.500, i: <svg width="16" height="16" viewBox="0 0 16 16" fill="none" stroke="#3692e7" strokeWidth="2.600"><path d="M3.500 6.500C5 3.500 8.500 2.500 11.500 4c3.500 2 3.500 7.500.5 9.500-2.500 1.700-5.500 1.500-8-.5" /><path d="M0 1v6.500h6.500z" fill="#3692e7" stroke="none" /></svg> },
  { t: "CLEAR BOARD", w: 90, i: <svg width="16" height="16" viewBox="0 0 16 16" fill="none" stroke="#3692e7" strokeWidth="1.300"><path d="M1.500 4h13M5 4V1.300h6V4M3 4v11h10V4M6 6.500v6M8 6.500v6M10 6.500v6" /></svg> },
  { t: "FLIP BOARD", w: 75.500, i: <svg width="17" height="16" viewBox="0 0 17 16" fill="none" stroke="#3692e7" strokeWidth="2"><path d="M5 2h7l2 2v1.500M12 14H5l-2-2V9" /><path d="M-.5 6.500h7.500L3.300 2.500zM10 9.500h7.500l-3.700-4z" fill="#3692e7" stroke="none" /></svg> },
  { t: "ANALYSIS BOARD", w: 110, off: true, i: <svg width="16" height="17" viewBox="0 0 16 17" fill="none" stroke="#3692e7" strokeWidth="1.500"><path d="M0 16h16M1 12.500h7" /><path d="M10 4c5.500 1.500 5 8.500.5 11.500" strokeWidth="2.200" /><path d="m7.500 1.500 4 1.500-3 7L4.500 9z" fill="#3692e7" stroke="none" /><path d="m9 0 1 2.500" /></svg> },
  { t: "CONTINUE FROM HERE", w: 147.500, off: true, i: <svg width="16" height="16" viewBox="0 0 16 16" fill="none" stroke="#3692e7" strokeWidth="1.200"><path d="m0 0 13 13m3-13L3 13M1.500 9.500l5 5.500M14.500 9.500l-5 5.500M0 15.500l3-3m13 3-3-3" /></svg> },
  { t: "STUDY", w: 43, off: true, i: <svg width="16" height="16" viewBox="0 0 16 16"><rect x=".6" y="1.600" width="14.800" height="13.800" rx="2.500" fill="none" stroke="#3692e7" strokeWidth="1.200" /><path d="M8 1.500h5.500l2 2V8H8v7.500H2.500l-2-2V8H8z" fill="#3692e7" /></svg> },
];

const NAV = [
  ["PLAY", 32, 53], ["PUZZLES", 58, 80], ["LEARN", 43.500, 65], ["WATCH", 47, 69], ["COMMUNITY", 86, 107], ["TOOLS", 45, 60],
];

export default function App() {
  return (
    <Desktop>
      <GlobalStyle />
      <TitleBar>
        <Tab>
          <svg width="16" height="16" viewBox="0 0 16 16" fill="none" stroke="#555" strokeWidth="1.300"><path d="M8 2C4 2 1.500 5 1.500 8.500S4 15 8 15s6.500-3 6.500-6M8 2c1-1 2-1 2-1l.5 2c3 2 4 5 4 7l-2 1C11 8 8 8 7.500 5" /></svg>
          <Fit w={133}>Board editor • lichess.org</Fit>
          <Push />
          <Line s={12} c="#3c4043" w={3}><path d="M4 4l16 16M20 4 4 20" /></Line>
        </Tab>
        <NewTab><Line s={14} c="#3c4043" w={2.800}><path d="M12 1v22M1 12h22" /></Line></NewTab>
        <Push />
        <WindowButtons>
          <WindowButton><Line s={11} c="#222" w={2}><path d="m2 7 10 10L22 7" /></Line></WindowButton>
          <WindowButton><Line s={10} c="#000" w={2.400}><path d="M0 12h24" /></Line></WindowButton>
          <WindowButton><Line s={11} c="#000" w={2.200}><path d="M2 7h15v15H2zM7 7V2h15v15h-5" /></Line></WindowButton>
          <WindowButton><Line s={11} c="#000" w={2}><path d="m1 1 22 22M23 1 1 23" /></Line></WindowButton>
        </WindowButtons>
      </TitleBar>

      <Toolbar>
        <ToolCell><Line s={18} w={2.500}><path d="M22 12H3M12 2.500 2.800 12l9.200 9.500" /></Line></ToolCell>
        <ToolCell><Line s={18} w={2.500} c="#b5b7ba"><path d="M2 12h19M12 2.500l9.200 9.500-9.200 9.500" /></Line></ToolCell>
        <ToolCell><Line s={18} w={2.500}><path d="M19.500 15A8.300 8.300 0 1 1 18 6l2.500 3.500M21 2v8h-8" /></Line></ToolCell>
        <ToolCell><Line s={18} w={2.500}><path d="M5.500 21V10H2.500L12 2l9.500 8h-3v11z" /></Line></ToolCell>
        <Omnibox>
          <svg width="10" height="14" viewBox="0 0 10 14"><path d="M0 5h10v8H0z" fill="#5f6368" /><path d="M2.500 5V3.500a2.500 2.500 0 0 1 5 0V5" fill="none" stroke="#5f6368" strokeWidth="1.400" /></svg>
          <Fit w={284}><b>lichess.org</b>/editor/8/8/8/8/8/8/8/n7_w_-_-_0_1</Fit>
          <OmniActions>
            <ToolCell><Line s={17} w={1.700}><path d="M8 7H3v15h16v-5M7 16c0-6 5-8 9-8V3l6 7-6 6v-4c-4 0-7 1-9 4z" /></Line></ToolCell>
            <ToolCell><Line s={18} w={2}><path d="m12 2 3 7 7.500.6-5.700 5 1.800 7.400-6.600-4-6.600 4 1.800-7.400-5.700-5L9 9z" /></Line></ToolCell>
          </OmniActions>
        </Omnibox>
        {EXTENSIONS.map((icon, i) => (
          <ToolCell key={i}>{icon}</ToolCell>
        ))}
      </Toolbar>

      <Bookmarks>
        {BOOKMARKS.map((b) => (
          <Bookmark key={b.t} $w={b.w} $gap={b.gap}>
            {b.i}
            <Fit w={b.tw}>{b.t}</Fit>
          </Bookmark>
        ))}
        <More>»</More>
        <Divider />
        <Bookmark $w={120} $gap={8}><Folder /><Fit w={92}>Other bookmarks</Fit></Bookmark>
      </Bookmarks>

      <Viewport>
        <Page>
          <Header>
            <SiteTitle><Fit w={151}>lichess<span>.org</span></Fit></SiteTitle>
            {NAV.map(([t, tw, w]) => (
              <NavItem key={t} $w={w}><Fit w={tw}>{t}</Fit></NavItem>
            ))}
            <HeaderTools>
              <SearchSlot><Line s={18} c="#a5a39e" w={3.600}><circle cx="10" cy="10" r="7.500" /><path d="m15.500 15.500 7 7" strokeWidth="4.500" /></Line></SearchSlot>
              <GearSlot>
                <svg width="16" height="17" viewBox="0 0 16 17" fill="none" stroke="#a5a39e"><circle cx="8" cy="8.500" r="4.300" strokeWidth="3.400" /><circle cx="8" cy="8.500" r="6.800" strokeWidth="2.400" strokeDasharray="2.700 2.640" /></svg>
              </GearSlot>
              <Fit w={49}>SIGN IN</Fit>
            </HeaderTools>
          </Header>
          <Main>
            <Editor>
              <PaletteRow />
              <BoardFrame>
                <Board>
                  {Array.from({ length: 64 }, (_, i) => {
                    const r = Math.floor(i / 8);
                    const f = i % 8;
                    return (
                      <Square key={i} $dark={(r + f) % 2 === 1}>
                        {f === 7 && <Rank>{8 - r}</Rank>}
                        {r === 7 && <File>{"abcdefgh"[f]}</File>}
                      </Square>
                    );
                  })}
                </Board>
                <BoardPiece><Knight size={103} /></BoardPiece>
                <Ink width="824" height="824" viewBox="0 0 824 824" fill="none" stroke="#ee1c24" strokeLinecap="round" strokeLinejoin="round">
                  {STROKES.map((q, i) => (
                    <g key={i} transform={`translate(${q.x} ${q.y}) scale(.33333)`} strokeWidth="24">
                      {q.paths.map((d) => <path key={d} d={d} />)}
                    </g>
                  ))}
                </Ink>
              </BoardFrame>
              <PaletteRow white />
              <Copyables>
                <CopyRow><RowLabel $w={41}><Fit w={27}>FEN</Fit></RowLabel><TextField><Fit w={163}>8/8/8/8/8/8/8/n7 w - - 0 1</Fit></TextField></CopyRow>
                <CopyRow><RowLabel $w={42}><Fit w={27}>URL</Fit></RowLabel><TextField><Fit w={345}>https://lichess.org/editor/8/8/8/8/8/8/8/n7_w_-_-_0_1</Fit></TextField></CopyRow>
              </Copyables>
            </Editor>
            <Side>
              <Meta>
                <Select><Fit w={87}>White to play</Fit><Chevron /></Select>
                <CastlingTitle><Fit w={57}>Castling</Fit></CastlingTitle>
                <CastlingRow $first><Fit w={68}>White O-O</Fit><Check $m="2px auto 0 3px" /><Check $m="2px 4px 0 0" /><Fit w={41}>O-O-O</Fit></CastlingRow>
                <CastlingRow><Fit w={65}>Black O-O</Fit><Check $m="2px auto 0 3px" /><Check $m="2px 4px 0 0" /><Fit w={41}>O-O-O</Fit></CastlingRow>
              </Meta>
              <Select $h={39}><Fit w={89}>Set the board</Fit><Chevron /></Select>
              <Select><Fit w={122}>Variant | Standard</Fit><Chevron /></Select>
              {ACTIONS.map((a) => (
                <Action key={a.t} $off={a.off}>{a.i}<Fit w={a.w}>{a.t}</Fit></Action>
              ))}
            </Side>
          </Main>
        </Page>
        <Scrollbar>
          <ScrollButton><svg width="8" height="5" viewBox="0 0 8 5"><path d="M4 0l4 5H0z" fill="#8b8b8b" /></svg></ScrollButton>
          <Thumb />
          <ScrollButton $lit><svg width="8" height="5" viewBox="0 0 8 5"><path d="M4 5l4-5H0z" fill="#fff" /></svg></ScrollButton>
        </Scrollbar>
      </Viewport>

      <Taskbar>
        <StartButton><svg width="16" height="16" viewBox="0 0 16 16" fill="#fff"><path d="M0 2.300 6.700 1.300v6.300H0zM7.400 1.200 16 0v7.600H7.400zM0 8.300h6.700v6.300L0 13.700zM7.400 8.300H16V16l-8.600-1.200z" /></svg></StartButton>
        <SearchBox>
          <Line s={16} c="#222" w={2}><circle cx="15" cy="9" r="7.500" /><path d="M9.500 14.500 1 23" /></Line>
          <Fit w={128}>Type here to search</Fit>
        </SearchBox>
        <TaskGlyph $w={47}><svg width="16" height="16" viewBox="0 0 16 16"><circle cx="8" cy="8" r="6.800" fill="none" stroke="#fff" strokeWidth="1.900" /></svg></TaskGlyph>
        <TaskGlyph $w={52}><svg width="16" height="16" viewBox="0 0 16 16" fill="none" stroke="#fff" strokeWidth="1.200"><path d="M.6 0v3h10V0M.6 5.500h10v5H.6zM.6 16v-3h10v3M14.500 0v3M14.500 7v9M13 4.500h3" /></svg></TaskGlyph>
        {TASKS.map((t, i) => (
          <Task key={i} $active={t.active} $run={t.run}>{t.i}</Task>
        ))}
        <Tray>
          <TraySlot $w={29}><svg width="22" height="22" viewBox="0 0 22 22"><path d="M12 1c7 5 7 13 0 16-4 2-9 1-12-3 8 1 13-4 12-13z" fill="#fdd017" /><circle cx="17.500" cy="18" r="3.500" fill="#e0142d" /></svg></TraySlot>
          <TraySlot $w={36}><Fit w={27}>82°F</Fit></TraySlot>
          <TraySlot $w={47}><Fit w={32}>Clear</Fit></TraySlot>
          <TraySlot $w={25}><svg width="14" height="9" viewBox="0 0 14 9"><path d="m1 8 6-6 6 6" fill="none" stroke="#eee" strokeWidth="1.300" /></svg></TraySlot>
          <TraySlot $w={22}><svg width="12" height="16" viewBox="0 0 12 16" fill="none" stroke="#eee" strokeWidth="1.200"><path d="M1 4.500h7v7H1zM8 7l3-2v6L8 9M3 2c2-1.300 4-1.300 6 0M3 14c2 1.300 4 1.300 6 0" /></svg></TraySlot>
          <TraySlot $w={30}><svg width="17" height="17" viewBox="0 0 17 17"><path d="M4 1l4 2.500L4 6 0 3.500zM12 1l4 2.500L12 6 8 3.500zM4 6l4 2.500L4 11 0 8.500zM8 10.500l3 2-3 2-3-2z" fill="#fff" /><circle cx="11.500" cy="11.500" r="4.800" fill="#d3132b" /><path d="m9.700 9.700 3.600 3.600m0-3.600-3.600 3.600" stroke="#fff" /></svg></TraySlot>
          <Clock><Fit w={42}>9:42 PM</Fit><Fit w={46}>4/7/2022</Fit></Clock>
          <TraySlot $w={36}><svg width="18" height="18" viewBox="0 0 18 18" fill="none" stroke="#fff" strokeWidth="1.200"><path d="M1 1h15v11h-3M1 1v12h5l3 3" /><path d="M14 11a3 3 0 0 1-4 4 3 3 0 1 0 4-4z" fill="#fff" stroke="none" /></svg></TraySlot>
          <PeekLine />
        </Tray>
      </Taskbar>
    </Desktop>
  );
}
